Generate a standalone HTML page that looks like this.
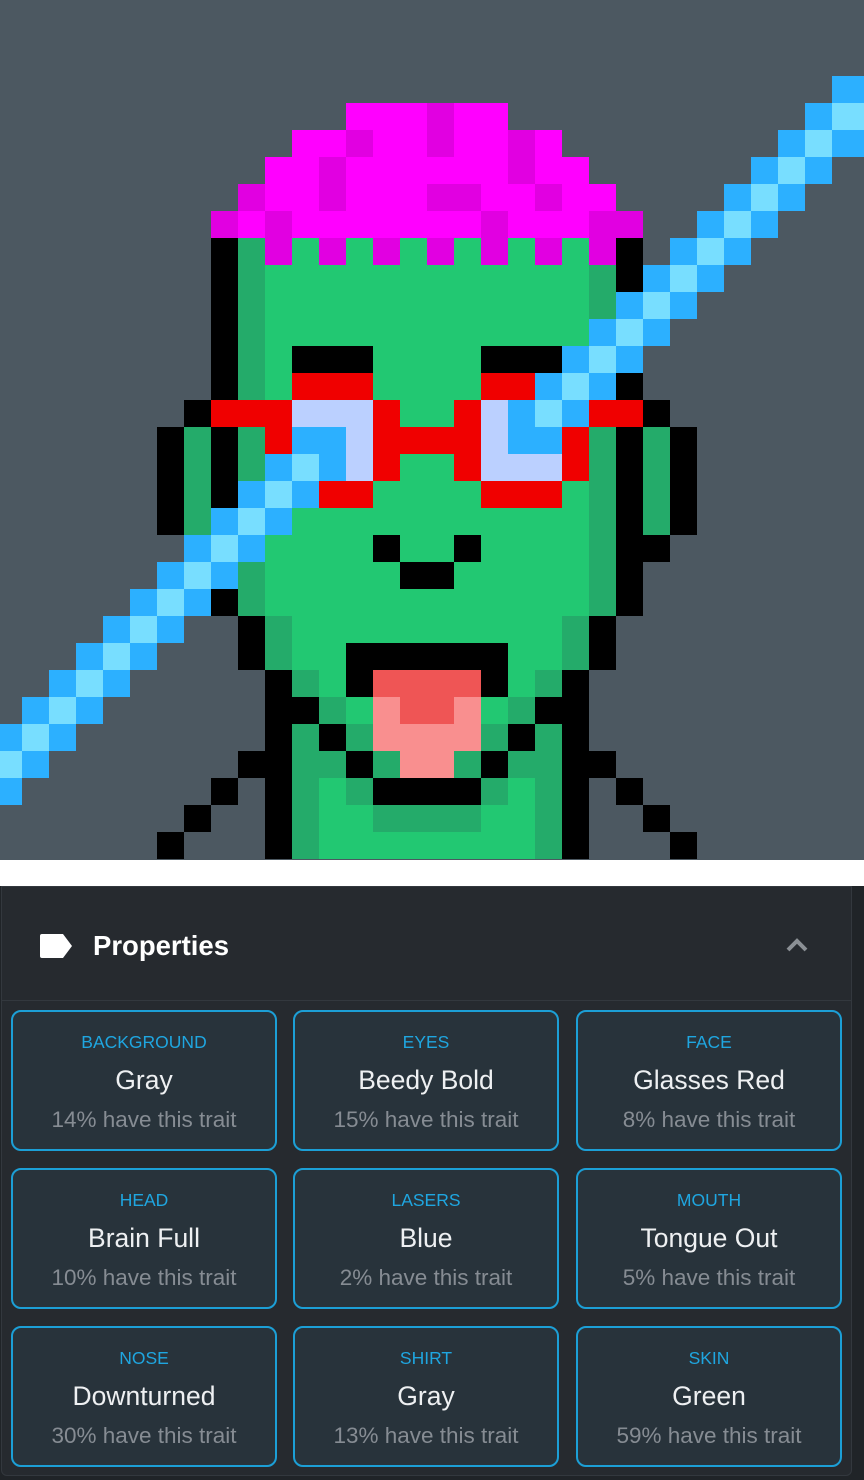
<!DOCTYPE html>
<html><head><meta charset="utf-8">
<style>
*{margin:0;padding:0;box-sizing:border-box}
html,body{width:864px;height:1480px;overflow:hidden;background:#ffffff;font-family:"Liberation Sans",sans-serif}
#art{position:absolute;left:0;top:0;width:864px;height:860px;background:#4c5861}
#bot{position:absolute;left:0;top:886px;width:864px;height:594px;background:#202428}
#panel{position:absolute;left:1px;top:886px;width:851px;height:590px;background:#262a2f;border:1px solid #33383e;border-radius:0 0 6px 6px}
#hdr{position:absolute;left:0;top:0;width:849px;height:114px;border-bottom:1px solid #33383e}
#tag{position:absolute;left:37px;top:46px}
#title{position:absolute;left:91px;top:43px;font-size:27.5px;font-weight:700;color:#fff}
#chev{position:absolute;left:785px;top:935px}
.card{position:absolute;width:266px;height:141px;border:2px solid #1c9fd6;border-radius:10px;background:#28333b;text-align:center;white-space:nowrap}
.l{position:absolute;left:0;right:0;top:20px;font-size:17.5px;color:#1fa6e0}
.v{position:absolute;left:0;right:0;top:53px;font-size:26.5px;color:#eef0f2}
.s{position:absolute;left:0;right:0;top:95px;font-size:22.5px;color:#868c93}
</style></head><body>
<svg id="art" width="864" height="860" viewBox="0 0 864 860" shape-rendering="crispEdges"><g id="px"></g></svg>
<div id="bot"></div>
<div id="panel">
 <div id="hdr">
  <svg id="tag" width="34" height="26" viewBox="0 0 34 26"><path d="M3 1H24L33 13L24 25H3Q1 25 1 23V3Q1 1 3 1Z" fill="#fff"/></svg>
  <div id="title">Properties</div>
 </div>
</div>
<svg id="chev" width="24" height="18" viewBox="0 0 24 18"><path d="M3 15L12 6L21 15" fill="none" stroke="#8b9095" stroke-width="4"/></svg>

<div class="card" style="left:11px;top:1010px"><div class="l">BACKGROUND</div><div class="v">Gray</div><div class="s">14% have this trait</div></div>
<div class="card" style="left:293px;top:1010px"><div class="l">EYES</div><div class="v">Beedy Bold</div><div class="s">15% have this trait</div></div>
<div class="card" style="left:576px;top:1010px"><div class="l">FACE</div><div class="v">Glasses Red</div><div class="s">8% have this trait</div></div>
<div class="card" style="left:11px;top:1168px"><div class="l">HEAD</div><div class="v">Brain Full</div><div class="s">10% have this trait</div></div>
<div class="card" style="left:293px;top:1168px"><div class="l">LASERS</div><div class="v">Blue</div><div class="s">2% have this trait</div></div>
<div class="card" style="left:576px;top:1168px"><div class="l">MOUTH</div><div class="v">Tongue Out</div><div class="s">5% have this trait</div></div>
<div class="card" style="left:11px;top:1326px"><div class="l">NOSE</div><div class="v">Downturned</div><div class="s">30% have this trait</div></div>
<div class="card" style="left:293px;top:1326px"><div class="l">SHIRT</div><div class="v">Gray</div><div class="s">13% have this trait</div></div>
<div class="card" style="left:576px;top:1326px"><div class="l">SKIN</div><div class="v">Green</div><div class="s">59% have this trait</div></div>

<script>
var C={M:'#ff00ff',D:'#e100e1',K:'#000000',G:'#22c872',g:'#24ab6a',R:'#f00000',W:'#bbd0ff',B:'#2cb0ff',L:'#78deff',T:'#ef5555',P:'#f98f8f'};
var R=[[],[],[],
[[31,31,'B']],
[[13,15,'M'],[16,16,'D'],[17,18,'M'],[30,30,'B'],[31,31,'L']],
[[11,12,'M'],[13,13,'D'],[14,15,'M'],[16,16,'D'],[17,18,'M'],[19,19,'D'],[20,20,'M'],[29,29,'B'],[30,30,'L'],[31,31,'B']],
[[10,11,'M'],[12,12,'D'],[13,18,'M'],[19,19,'D'],[20,21,'M'],[28,28,'B'],[29,29,'L'],[30,30,'B']],
[[9,9,'D'],[10,11,'M'],[12,12,'D'],[13,15,'M'],[16,17,'D'],[18,19,'M'],[20,20,'D'],[21,22,'M'],[27,27,'B'],[28,28,'L'],[29,29,'B']],
[[8,8,'D'],[9,9,'M'],[10,10,'D'],[11,17,'M'],[18,18,'D'],[19,21,'M'],[22,23,'D'],[26,26,'B'],[27,27,'L'],[28,28,'B']],
[[8,8,'K'],[9,9,'g'],[10,10,'D'],[11,11,'G'],[12,12,'D'],[13,13,'G'],[14,14,'D'],[15,15,'G'],[16,16,'D'],[17,17,'G'],[18,18,'D'],[19,19,'G'],[20,20,'D'],[21,21,'G'],[22,22,'D'],[23,23,'K'],[25,25,'B'],[26,26,'L'],[27,27,'B']],
[[8,8,'K'],[9,9,'g'],[10,21,'G'],[22,22,'g'],[23,23,'K'],[24,24,'B'],[25,25,'L'],[26,26,'B']],
[[8,8,'K'],[9,9,'g'],[10,21,'G'],[22,22,'g'],[23,23,'B'],[24,24,'L'],[25,25,'B']],
[[8,8,'K'],[9,9,'g'],[10,21,'G'],[22,22,'B'],[23,23,'L'],[24,24,'B']],
[[8,8,'K'],[9,9,'g'],[10,10,'G'],[11,13,'K'],[14,17,'G'],[18,20,'K'],[21,21,'B'],[22,22,'L'],[23,23,'B']],
[[8,8,'K'],[9,9,'g'],[10,10,'G'],[11,13,'R'],[14,17,'G'],[18,19,'R'],[20,20,'B'],[21,21,'L'],[22,22,'B'],[23,23,'K']],
[[7,7,'K'],[8,10,'R'],[11,13,'W'],[14,14,'R'],[15,16,'G'],[17,17,'R'],[18,18,'W'],[19,19,'B'],[20,20,'L'],[21,21,'B'],[22,23,'R'],[24,24,'K']],
[[6,6,'K'],[7,7,'g'],[8,8,'K'],[9,9,'g'],[10,10,'R'],[11,12,'B'],[13,13,'W'],[14,17,'R'],[18,18,'W'],[19,20,'B'],[21,21,'R'],[22,22,'g'],[23,23,'K'],[24,24,'g'],[25,25,'K']],
[[6,6,'K'],[7,7,'g'],[8,8,'K'],[9,9,'g'],[10,10,'B'],[11,11,'L'],[12,12,'B'],[13,13,'W'],[14,14,'R'],[15,16,'G'],[17,17,'R'],[18,20,'W'],[21,21,'R'],[22,22,'g'],[23,23,'K'],[24,24,'g'],[25,25,'K']],
[[6,6,'K'],[7,7,'g'],[8,8,'K'],[9,9,'B'],[10,10,'L'],[11,11,'B'],[12,13,'R'],[14,17,'G'],[18,20,'R'],[21,21,'G'],[22,22,'g'],[23,23,'K'],[24,24,'g'],[25,25,'K']],
[[6,6,'K'],[7,7,'g'],[8,8,'B'],[9,9,'L'],[10,10,'B'],[11,21,'G'],[22,22,'g'],[23,23,'K'],[24,24,'g'],[25,25,'K']],
[[7,7,'B'],[8,8,'L'],[9,9,'B'],[10,13,'G'],[14,14,'K'],[15,16,'G'],[17,17,'K'],[18,21,'G'],[22,22,'g'],[23,24,'K']],
[[6,6,'B'],[7,7,'L'],[8,8,'B'],[9,9,'g'],[10,14,'G'],[15,16,'K'],[17,21,'G'],[22,22,'g'],[23,23,'K']],
[[5,5,'B'],[6,6,'L'],[7,7,'B'],[8,8,'K'],[9,9,'g'],[10,21,'G'],[22,22,'g'],[23,23,'K']],
[[4,4,'B'],[5,5,'L'],[6,6,'B'],[9,9,'K'],[10,10,'g'],[11,20,'G'],[21,21,'g'],[22,22,'K']],
[[3,3,'B'],[4,4,'L'],[5,5,'B'],[9,9,'K'],[10,10,'g'],[11,12,'G'],[13,18,'K'],[19,20,'G'],[21,21,'g'],[22,22,'K']],
[[2,2,'B'],[3,3,'L'],[4,4,'B'],[10,10,'K'],[11,11,'g'],[12,12,'G'],[13,13,'K'],[14,17,'T'],[18,18,'K'],[19,19,'G'],[20,20,'g'],[21,21,'K']],
[[1,1,'B'],[2,2,'L'],[3,3,'B'],[10,11,'K'],[12,12,'g'],[13,13,'G'],[14,14,'P'],[15,16,'T'],[17,17,'P'],[18,18,'G'],[19,19,'g'],[20,21,'K']],
[[0,0,'B'],[1,1,'L'],[2,2,'B'],[10,10,'K'],[11,11,'g'],[12,12,'K'],[13,13,'g'],[14,17,'P'],[18,18,'g'],[19,19,'K'],[20,20,'g'],[21,21,'K']],
[[0,0,'L'],[1,1,'B'],[9,10,'K'],[11,12,'g'],[13,13,'K'],[14,14,'g'],[15,16,'P'],[17,17,'g'],[18,18,'K'],[19,20,'g'],[21,22,'K']],
[[0,0,'B'],[8,8,'K'],[10,10,'K'],[11,11,'g'],[12,12,'G'],[13,13,'g'],[14,17,'K'],[18,18,'g'],[19,19,'G'],[20,20,'g'],[21,21,'K'],[23,23,'K']],
[[7,7,'K'],[10,10,'K'],[11,11,'g'],[12,13,'G'],[14,17,'g'],[18,19,'G'],[20,20,'g'],[21,21,'K'],[24,24,'K']],
[[6,6,'K'],[10,10,'K'],[11,11,'g'],[12,19,'G'],[20,20,'g'],[21,21,'K'],[25,25,'K']]
];
var s='';
for(var r=0;r<R.length;r++){for(var i=0;i<R[r].length;i++){var a=R[r][i];var x=27*a[0]-5,w=27*(a[1]-a[0]+1);if(a[1]==31)w+=10;s+='<rect x="'+x+'" y="'+(27*r-5)+'" width="'+w+'" height="27" fill="'+C[a[2]]+'"/>';}}
document.getElementById('px').innerHTML=s;
</script>
</body></html>
